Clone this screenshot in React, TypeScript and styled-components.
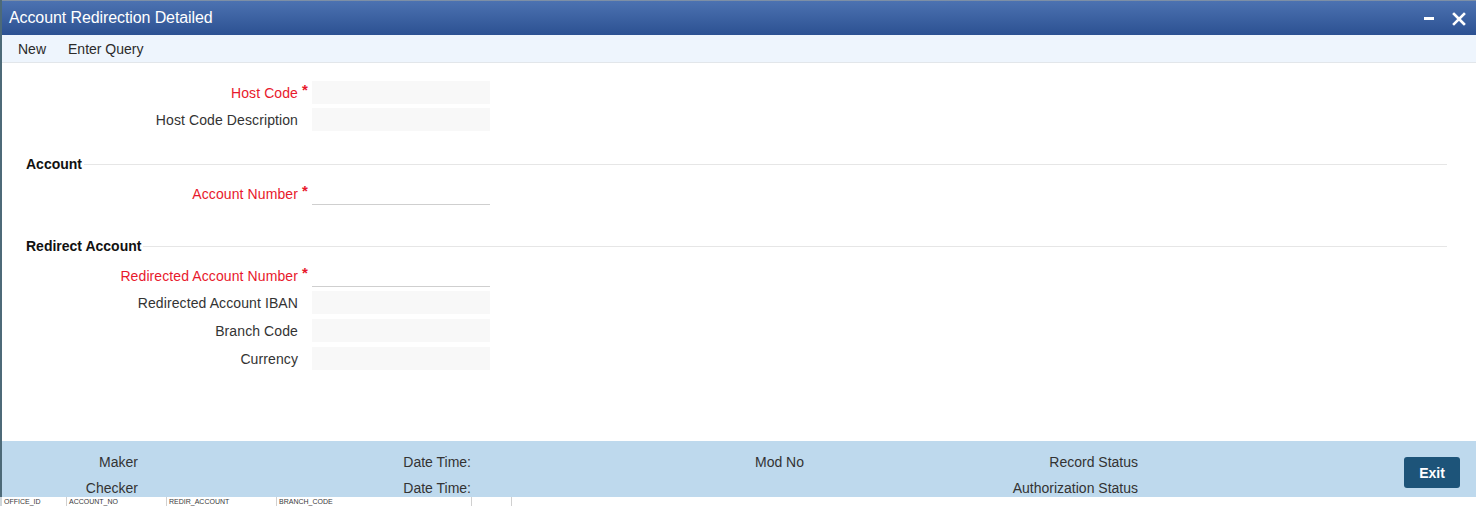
import styled, { createGlobalStyle } from 'styled-components';

const GlobalStyle = createGlobalStyle`
  html, body {
    margin: 0;
    padding: 0;
    background: #ffffff;
    font-family: 'Liberation Sans', Arial, sans-serif;
    overflow: hidden;
  }
`;

const Screen = styled.div`
  width: 1476px;
  height: 506px;
  display: flex;
  flex-direction: column;
  overflow: hidden;
`;

const Window = styled.div`
  height: 497px;
  display: flex;
  flex-direction: column;
  border-left: 2px solid #4d6a78;
  box-sizing: border-box;
`;

const TitleBar = styled.header`
  height: 35px;
  flex: none;
  display: flex;
  align-items: center;
  justify-content: space-between;
  padding: 0 10px 0 7px;
  background: linear-gradient(#4c72b1, #2c5192);
  border-top: 1px solid #7d8fa6;
  box-sizing: border-box;

  h1 {
    margin: 0;
    font-size: 16px;
    font-weight: 400;
    color: #ffffff;
    letter-spacing: -0.1px;
  }
`;

const WinControls = styled.div`
  display: flex;
  align-items: center;
  gap: 18px;
  margin-top: 1px;
`;

const Toolbar = styled.nav`
  height: 28px;
  flex: none;
  display: flex;
  align-items: center;
  gap: 22px;
  padding-left: 16px;
  background: #eef5fd;
  border-bottom: 1px solid #e2e6ea;
  box-sizing: border-box;
  font-size: 14px;
  color: #2b2b2b;
`;

const Body = styled.main`
  flex: 1;
  padding: 18px 29px 0 0;
  box-sizing: border-box;
`;

const Row = styled.div<{ $gap?: number }>`
  display: flex;
  align-items: center;
  height: 23px;
  margin-bottom: ${(p) => p.$gap ?? 4}px;
`;

const Label = styled.label<{ $required?: boolean }>`
  width: 296px;
  text-align: right;
  font-size: 14px;
  letter-spacing: 0.1px;
  color: ${(p) => (p.$required ? '#e8192c' : '#333333')};
`;

const Req = styled.span`
  width: 14px;
  align-self: flex-start;
  padding-left: 4px;
  box-sizing: border-box;
  color: #e8192c;
  font-size: 15px;
  font-weight: 700;
  line-height: 18px;
`;

const Input = styled.input<{ $editable?: boolean }>`
  width: 178px;
  height: 23px;
  box-sizing: border-box;
  margin: 0;
  padding: 0 6px;
  border: none;
  outline: none;
  font: inherit;
  font-size: 14px;
  background: ${(p) => (p.$editable ? '#ffffff' : '#f8f8f8')};
  border-bottom: 1px solid ${(p) => (p.$editable ? '#cfcfcf' : '#f8f8f8')};
`;

const SectionHead = styled.div<{ $top: number; $bottom: number }>`
  display: flex;
  align-items: center;
  gap: 2px;
  height: 18px;
  margin: ${(p) => p.$top}px 0 ${(p) => p.$bottom}px 24px;

  h2 {
    margin: 0;
    font-size: 14px;
    font-weight: 700;
    color: #111111;
  }

  &::after {
    content: '';
    flex: 1;
    height: 1px;
    background: #e6e6e6;
  }
`;

const Footer = styled.footer`
  height: 56px;
  flex: none;
  display: grid;
  grid-template-columns: 136px 333px 284px 100px 283px 1fr;
  grid-template-rows: 20px 20px;
  row-gap: 6px;
  padding-top: 11px;
  box-sizing: border-box;
  background: #bed9ed;
  font-size: 14px;
  color: #333333;
  line-height: 20px;
`;

const FootLabel = styled.span<{ $align?: 'left' | 'right' }>`
  text-align: ${(p) => p.$align ?? 'right'};
`;

const ExitCell = styled.div`
  grid-row: 1 / span 2;
  grid-column: 6;
  display: flex;
  justify-content: flex-end;
  padding: 5px 16px 0 0;
`;

const ExitButton = styled.button`
  width: 56px;
  height: 31px;
  border: none;
  border-radius: 3px;
  background: #1d5479;
  color: #ffffff;
  font-family: inherit;
  font-size: 14px;
  font-weight: 700;
  cursor: pointer;
`;

const Backdrop = styled.div`
  height: 9px;
  display: flex;
  overflow: hidden;
  background: #ffffff;
  border-left: 2px solid #cfd6da;
`;

const BackCell = styled.span<{ $w: number }>`
  width: ${(p) => p.$w}px;
  flex: none;
  border-right: 1px solid #d0d0d0;
  font-size: 7px;
  line-height: 9px;
  color: #3a3a3a;
  white-space: nowrap;
  overflow: hidden;
  padding-left: 2px;
  box-sizing: border-box;
`;

const Minimize = () => (
  <svg width="10" height="4" viewBox="0 0 10 4">
    <rect x="0" y="0" width="10" height="3" fill="#ffffff" />
  </svg>
);

const Close = () => (
  <svg width="14" height="14" viewBox="0 0 14 14">
    <path d="M2 2 L12 12 M12 2 L2 12" stroke="#ffffff" strokeWidth="2.6" strokeLinecap="square" />
  </svg>
);

export default function App() {
  return (
    <Screen>
      <GlobalStyle />
      <Window>
        <TitleBar>
          <h1>Account Redirection Detailed</h1>
          <WinControls>
            <Minimize />
            <Close />
          </WinControls>
        </TitleBar>
        <Toolbar>
          <span>New</span>
          <span>Enter Query</span>
        </Toolbar>
        <Body>
          <Row>
            <Label $required>Host Code</Label>
            <Req>*</Req>
            <Input readOnly />
          </Row>
          <Row>
            <Label>Host Code Description</Label>
            <Req />
            <Input readOnly />
          </Row>

          <SectionHead $top={24} $bottom={9}>
            <h2>Account</h2>
          </SectionHead>
          <Row>
            <Label $required>Account Number</Label>
            <Req>*</Req>
            <Input $editable />
          </Row>

          <SectionHead $top={32} $bottom={9}>
            <h2>Redirect Account</h2>
          </SectionHead>
          <Row>
            <Label $required>Redirected Account Number</Label>
            <Req>*</Req>
            <Input $editable />
          </Row>
          <Row $gap={5}>
            <Label>Redirected Account IBAN</Label>
            <Req />
            <Input readOnly />
          </Row>
          <Row $gap={5}>
            <Label>Branch Code</Label>
            <Req />
            <Input readOnly />
          </Row>
          <Row>
            <Label>Currency</Label>
            <Req />
            <Input readOnly />
          </Row>
        </Body>
        <Footer>
          <FootLabel>Maker</FootLabel>
          <FootLabel>Date Time:</FootLabel>
          <span />
          <FootLabel $align="left">Mod No</FootLabel>
          <FootLabel>Record Status</FootLabel>
          <FootLabel>Checker</FootLabel>
          <FootLabel>Date Time:</FootLabel>
          <span />
          <span />
          <FootLabel>Authorization Status</FootLabel>
          <ExitCell>
            <ExitButton type="button">Exit</ExitButton>
          </ExitCell>
        </Footer>
      </Window>
      <Backdrop>
        <BackCell $w={65}>OFFICE_ID</BackCell>
        <BackCell $w={100}>ACCOUNT_NO</BackCell>
        <BackCell $w={110}>REDIR_ACCOUNT</BackCell>
        <BackCell $w={195}>BRANCH_CODE</BackCell>
        <BackCell $w={40}></BackCell>
      </Backdrop>
    </Screen>
  );
}
